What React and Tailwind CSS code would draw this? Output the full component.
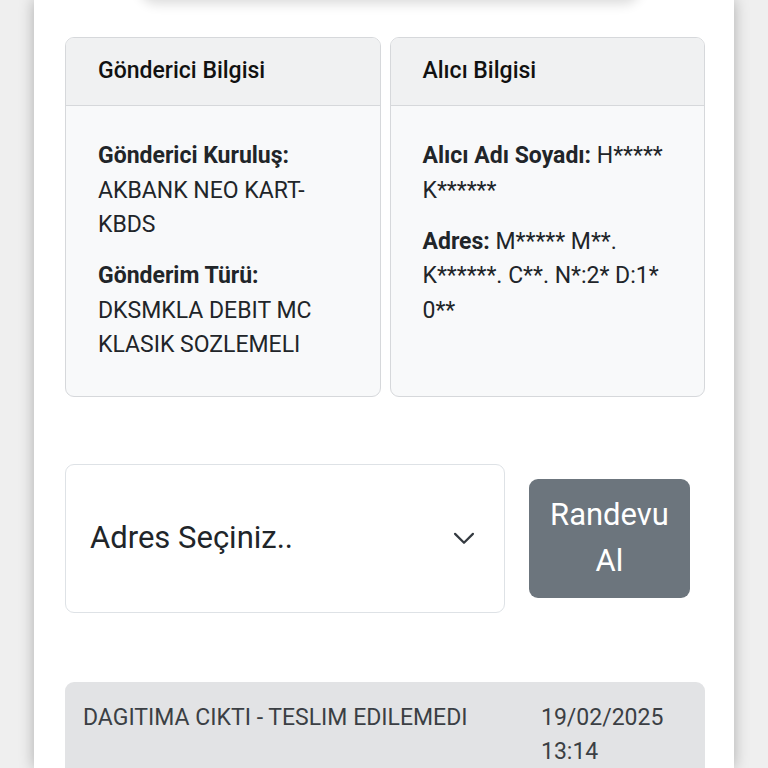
import React from "react";

function InfoCard({ title, children }) {
  return (
    <div className="flex flex-col rounded-[9px] border border-[#d6d8db] bg-[#f8f9fa] overflow-hidden">
      <div className="h-[68px] shrink-0 flex items-center px-[32px] bg-[#f0f1f2] border-b border-[#d6d8db]">
        <h5 className="text-[23px] font-medium text-[#111]">{title}</h5>
      </div>
      <div className="px-[32px] pt-[33px] pb-[33px] text-[23px] leading-[34.5px] text-[#212529] flex flex-col gap-[16.5px]">
        {children}
      </div>
    </div>
  );
}

export default function App() {
  return (
    <div
      className="h-[768px] overflow-hidden bg-[#efefef] flex justify-center"
      style={{ fontFamily: "Roboto, 'Noto Sans', sans-serif" }}
    >
      <div className="w-[700px] shrink-0 bg-white shadow-[0_0_14px_rgba(0,0,0,0.28)]">
        <div className="-mt-[30px] h-[30px] ml-[106px] mr-[94px] bg-white rounded-b-2xl shadow-[0_4px_12px_rgba(0,0,0,0.14)]"></div>

        <div className="pl-[31px] pr-[29px] pt-[37px]">
          <div className="grid grid-cols-2 gap-[9px]">
            <InfoCard title="Gönderici Bilgisi">
              <div>
                <b className="font-bold">Gönderici Kuruluş:</b>
                <br />
                AKBANK NEO KART-
                <br />
                KBDS
              </div>
              <div>
                <b className="font-bold">Gönderim Türü:</b>
                <br />
                DKSMKLA DEBIT MC
                <br />
                KLASIK SOZLEMELI
              </div>
            </InfoCard>
            <InfoCard title="Alıcı Bilgisi">
              <div>
                <b className="font-bold">Alıcı Adı Soyadı:</b> H*****
                <br />
                K******
              </div>
              <div>
                <b className="font-bold">Adres:</b> M***** M**.
                <br />
                K******. C**. N*:2* D:1*
                <br />
                0**
              </div>
            </InfoCard>
          </div>

          <div className="mt-[67px] flex items-center gap-[24px]">
            <div className="w-[440px] h-[149px] shrink-0 rounded-[9px] border border-[#dee2e6] bg-white flex items-center justify-between pl-[24px] pr-[29px]">
              <span className="text-[31px] text-[#212529]">Adres Seçiniz..</span>
              <svg width="22" height="22" viewBox="0 0 16 16" fill="none">
                <path d="M1.5 5l6.5 6.5 6.5-6.5" stroke="#343a40" strokeWidth="1.6" strokeLinecap="round" strokeLinejoin="round" />
              </svg>
            </div>
            <button className="w-[161px] h-[119px] shrink-0 rounded-[9px] bg-[#6c757d] text-white text-[31px] leading-[46px] px-[18px]">
              Randevu Al
            </button>
          </div>

          <div className="mt-[69px] rounded-[9px] bg-[#e2e3e5] pl-[18px] pr-[20px] pt-[19px] pb-[16px] flex text-[23px] leading-[34.5px] text-[#3b3f44]">
            <div className="flex-1">DAGITIMA CIKTI - TESLIM EDILEMEDI</div>
            <div className="w-[144px]">19/02/2025 13:14</div>
          </div>
        </div>
      </div>
    </div>
  );
}
